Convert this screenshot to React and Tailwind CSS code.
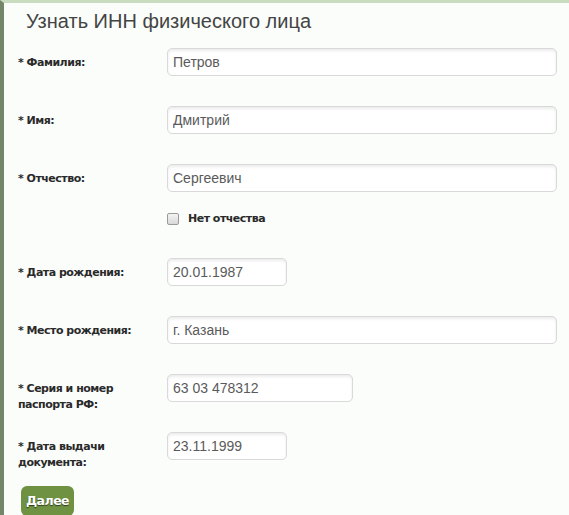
import React from "react";

const fields = [
  { label: ["* Фамилия:"], value: "Петров", width: "w-[390px]" },
  { label: ["* Имя:"], value: "Дмитрий", width: "w-[390px]" },
  { label: ["* Отчество:"], value: "Сергеевич", width: "w-[390px]", noPatronymic: true },
  { label: ["* Дата рождения:"], value: "20.01.1987", width: "w-[120px]" },
  { label: ["* Место рождения:"], value: "г. Казань", width: "w-[390px]" },
  { label: ["* Серия и номер", "паспорта РФ:"], value: "63 03 478312", width: "w-[186px]" },
  { label: ["* Дата выдачи", "документа:"], value: "23.11.1999", width: "w-[120px]" },
];

const App = () => {
  return (
    <div className="h-[515px] w-[569px] overflow-hidden bg-[#fbfdfb] border-t-[3px] border-l-[4px] border-t-[#c9dcbf] border-l-[#74866a] font-['Liberation_Sans',Arial,sans-serif]">
      <h1 className="pl-[22px] pt-[5px] text-[20px] leading-[26px] text-[#444] font-['Liberation_Sans',Arial,sans-serif]">
        Узнать ИНН физического лица
      </h1>

      <form className="pl-[14px] pt-[14px]">
        {fields.map((f, i) => (
          <div key={i} className={`${i === 0 ? "" : "mt-[30px]"} ${f.noPatronymic ? "pb-[3px]" : ""}`}>
            <div className="flex h-[28px] items-start">
              <label className="w-[149px] shrink-0 pt-[7px] text-[11px] leading-[16px] font-bold text-[#2a2a2a] font-['DejaVu_Sans',sans-serif] tracking-[-0.5px]">
                {f.label.map((l, j) => (
                  <div key={j}>{l}</div>
                ))}
              </label>
              <input
                type="text"
                defaultValue={f.value}
                className={`${f.width} h-[28px] shrink-0 rounded-[5px] border border-[#d9d9d9] bg-white px-[5px] text-[14px] text-[#5a5a5a] shadow-[inset_0_2px_3px_rgba(0,0,0,0.08)] outline-none`}
              />
            </div>
            {f.noPatronymic && (
              <div className="ml-[149px] mt-[21px] flex h-[12px] items-center gap-[9px]">
                <span className="h-[12px] w-[12px] rounded-[2px] border border-[#9a9a9a] bg-gradient-to-b from-[#f4f4f4] to-[#d8d8d8]" />
                <span className="text-[11px] font-bold text-[#2a2a2a] font-['DejaVu_Sans',sans-serif] tracking-[-0.5px]">
                  Нет отчества
                </span>
              </div>
            )}
          </div>
        ))}

        <button
          type="button"
          className="mt-[26px] ml-[3px] h-[30px] w-[53px] rounded-[6px] bg-[#6e9142] text-[12.5px] font-bold text-white [text-shadow:0_1px_1px_rgba(0,0,0,0.6)] font-['DejaVu_Sans',sans-serif] tracking-[-0.5px]"
        >
          Далее
        </button>
      </form>
    </div>
  );
};

export default App;
